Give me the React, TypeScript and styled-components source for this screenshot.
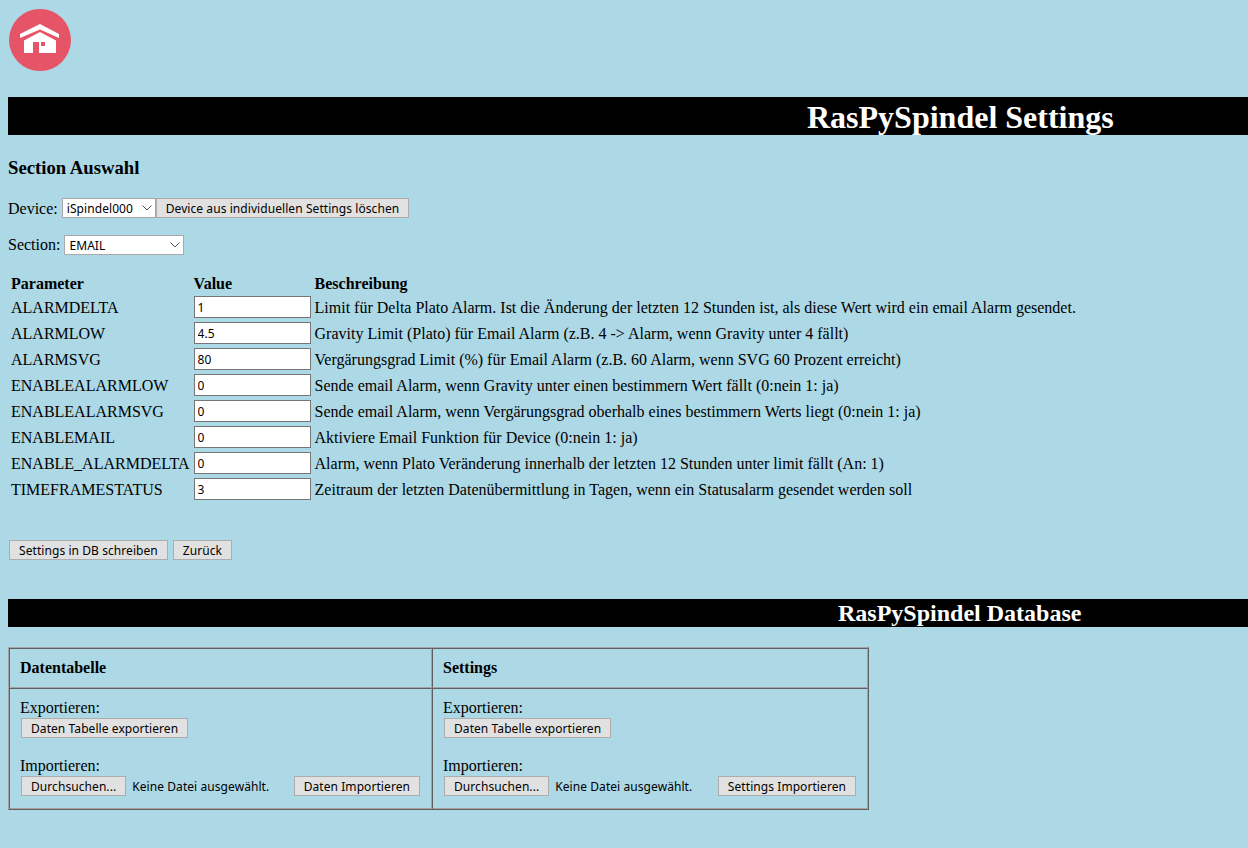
import React from "react";
import styled, { createGlobalStyle } from "styled-components";

const params = [
  ["ALARMDELTA", "1", "Limit für Delta Plato Alarm. Ist die Änderung der letzten 12 Stunden ist, als diese Wert wird ein email Alarm gesendet."],
  ["ALARMLOW", "4.5", "Gravity Limit (Plato) für Email Alarm (z.B. 4 -> Alarm, wenn Gravity unter 4 fällt)"],
  ["ALARMSVG", "80", "Vergärungsgrad Limit (%) für Email Alarm (z.B. 60 Alarm, wenn SVG 60 Prozent erreicht)"],
  ["ENABLEALARMLOW", "0", "Sende email Alarm, wenn Gravity unter einen bestimmern Wert fällt (0:nein 1: ja)"],
  ["ENABLEALARMSVG", "0", "Sende email Alarm, wenn Vergärungsgrad oberhalb eines bestimmern Werts liegt (0:nein 1: ja)"],
  ["ENABLEMAIL", "0", "Aktiviere Email Funktion für Device (0:nein 1: ja)"],
  ["ENABLE_ALARMDELTA", "0", "Alarm, wenn Plato Veränderung innerhalb der letzten 12 Stunden unter limit fällt (An: 1)"],
  ["TIMEFRAMESTATUS", "3", "Zeitraum der letzten Datenübermittlung in Tagen, wenn ein Statusalarm gesendet werden soll"],
];

function Chevron() {
  return (
    <ChevronIcon width="10" height="6" viewBox="0 0 10 6">
      <path d="M0.5 0.5 L5 5 L9.5 0.5" fill="none" stroke="#555" strokeWidth="1" />
    </ChevronIcon>
  );
}

function HomeLogo() {
  return (
    <LogoBox>
      <svg width="62" height="62" viewBox="0 0 62 62">
        <circle cx="31" cy="31" r="31" fill="#e65467" />
        <path d="M11 25 L31 15 L50 25 L50 29 L31 20.5 L11 29 Z" fill="#fff" />
        <path d="M15 31.5 L31 23 L47 31.5 L47 44 L30 44 L30 33 L24 33 L24 44 L15 44 Z" fill="#fff" />
        <rect x="32" y="33" width="4" height="4" fill="#e65467" />
      </svg>
    </LogoBox>
  );
}

function TransferCell({ importLabel }: { importLabel: string }) {
  return (
    <DbCell>
      <CellLabel>Exportieren:</CellLabel>
      <ButtonLine>
        <Button>Daten Tabelle exportieren</Button>
      </ButtonLine>
      <CellGap />
      <CellLabel>Importieren:</CellLabel>
      <FileRow>
        <Button>Durchsuchen...</Button>
        <FileName>Keine Datei ausgewählt.</FileName>
        <Button>{importLabel}</Button>
      </FileRow>
    </DbCell>
  );
}

export default function App() {
  return (
    <>
      <GlobalStyle />
      <HomeLogo />
      <MainBanner>RasPySpindel Settings</MainBanner>
      <SectionTitle>Section Auswahl</SectionTitle>
      <FormLine>
        <LineLabel $nudge={1}>Device:</LineLabel>
        <SelectWrap $width={94}>
          <SelectBox defaultValue="iSpindel000">
            <option>iSpindel000</option>
          </SelectBox>
          <Chevron />
        </SelectWrap>
        <Button>Device aus individuellen Settings löschen</Button>
      </FormLine>
      <FormLine $top={17}>
        <LineLabel>Section:</LineLabel>
        <SelectWrap $width={120}>
          <SelectBox defaultValue="EMAIL">
            <option>EMAIL</option>
          </SelectBox>
          <Chevron />
        </SelectWrap>
      </FormLine>
      <ParamTable>
        <thead>
          <tr>
            <HeadCell>Parameter</HeadCell>
            <HeadCell>Value</HeadCell>
            <HeadCell>Beschreibung</HeadCell>
          </tr>
        </thead>
        <tbody>
          {params.map(([name, value, text]) => (
            <tr key={name}>
              <ParamCell>{name}</ParamCell>
              <ParamCell>
                <ValueInput defaultValue={value} />
              </ParamCell>
              <ParamCell>{text}</ParamCell>
            </tr>
          ))}
        </tbody>
      </ParamTable>
      <ActionRow>
        <Button>Settings in DB schreiben</Button>
        <Button>Zurück</Button>
      </ActionRow>
      <SubBanner>RasPySpindel Database</SubBanner>
      <DbTable>
        <thead>
          <tr>
            <DbHead $wide>Datentabelle</DbHead>
            <DbHead>Settings</DbHead>
          </tr>
        </thead>
        <tbody>
          <tr>
            <TransferCell importLabel="Daten Importieren" />
            <TransferCell importLabel="Settings Importieren" />
          </tr>
        </tbody>
      </DbTable>
    </>
  );
}

const GlobalStyle = createGlobalStyle`
  html, body {
    margin: 0;
    padding: 0;
  }
  body {
    background: #add8e6;
    color: #000;
    font-family: "Liberation Serif", serif;
    font-size: 16px;
    padding: 0 0 0 8px;
    height: 848px;
    overflow: hidden;
    box-sizing: border-box;
  }
`;

const LogoBox = styled.div`
  height: 97px;
  padding: 9px 0 0 1px;
  box-sizing: border-box;
`;

const MainBanner = styled.div`
  background: #000;
  color: #fff;
  height: 38px;
  line-height: 40px;
  font-size: 32px;
  font-weight: bold;
  padding-left: 799px;
  white-space: nowrap;
`;

const SubBanner = styled(MainBanner)`
  height: 28px;
  line-height: 28px;
  font-size: 24px;
  padding-left: 830px;
  margin-top: 39px;
`;

const SectionTitle = styled.h3`
  font-size: 18.72px;
  font-weight: bold;
  line-height: 22px;
  margin: 22px 0 19px;
`;

const FormLine = styled.div<{ $top?: number }>`
  display: flex;
  align-items: center;
  height: 20px;
  margin-top: ${(p) => p.$top ?? 0}px;
`;

const LineLabel = styled.span<{ $nudge?: number }>`
  padding-top: ${(p) => p.$nudge ?? 0}px;
`;

const SelectWrap = styled.span<{ $width: number }>`
  position: relative;
  display: inline-block;
  width: ${(p) => p.$width}px;
  height: 20px;
  margin-left: 4px;
`;

const SelectBox = styled.select`
  appearance: none;
  width: 100%;
  height: 100%;
  background: #fff;
  border: 1px solid #a9a9a9;
  border-radius: 0;
  padding: 0 0 0 4px;
  font-family: "Noto Sans", sans-serif;
  font-size: 12px;
  letter-spacing: 0.07px;
  color: #000;
  outline: none;
`;

const ChevronIcon = styled.svg`
  position: absolute;
  right: 4px;
  top: 7px;
  pointer-events: none;
`;

const Button = styled.button`
  height: 20px;
  padding: 0 9px;
  background: #e1e1e1;
  border: 1px solid #adadad;
  border-radius: 0;
  font-family: "Noto Sans", sans-serif;
  font-size: 12px;
  letter-spacing: 0.07px;
  color: #000;
  white-space: nowrap;
  cursor: pointer;
`;

const ParamTable = styled.table`
  border-spacing: 2px;
  border-collapse: separate;
  margin-top: 17px;
`;

const HeadCell = styled.th`
  padding: 1px;
  height: 18px;
  text-align: left;
  font-weight: bold;
  line-height: 18px;
`;

const ParamCell = styled.td`
  padding: 1px;
  height: 22px;
  line-height: 18px;
  vertical-align: middle;
  white-space: nowrap;
`;

const ValueInput = styled.input`
  display: block;
  box-sizing: border-box;
  width: 117px;
  height: 22px;
  margin: -1px 0 1px;
  padding: 0 3px;
  background: #fff;
  border: 1px solid #767676;
  border-radius: 0;
  font-family: "Noto Sans", sans-serif;
  font-size: 12px;
  color: #000;
  outline: none;
`;

const ActionRow = styled.div`
  display: flex;
  gap: 5px;
  margin: 36px 0 0 1px;
`;

const DbTable = styled.table`
  width: 861px;
  table-layout: fixed;
  border-collapse: separate;
  border-spacing: 0;
  margin-top: 20px;
  border: 1px solid;
  border-color: #a3a3a3 #5f5f5f #5f5f5f #a3a3a3;
`;

const DbHead = styled.th<{ $wide?: boolean }>`
  width: ${(p) => (p.$wide ? "423px" : "auto")};
  height: 40px;
  padding: 0 10px;
  box-sizing: border-box;
  border: 1px solid;
  border-color: #5f5f5f #a3a3a3 #a3a3a3 #5f5f5f;
  text-align: left;
  font-weight: bold;
`;

const DbCell = styled.td`
  height: 121px;
  padding: 10px;
  box-sizing: border-box;
  border: 1px solid;
  border-color: #5f5f5f #a3a3a3 #a3a3a3 #5f5f5f;
  vertical-align: top;
`;

const CellLabel = styled.div`
  line-height: 18px;
`;

const ButtonLine = styled.div`
  margin-top: 1px;
  padding-left: 1px;
`;

const CellGap = styled.div`
  height: 19px;
`;

const FileRow = styled.div`
  display: flex;
  align-items: center;
  margin-top: 1px;
  padding: 0 1px;
`;

const FileName = styled.span`
  flex: 1;
  padding-left: 6px;
  font-family: "Noto Sans", sans-serif;
  font-size: 12px;
  letter-spacing: 0.07px;
`;
